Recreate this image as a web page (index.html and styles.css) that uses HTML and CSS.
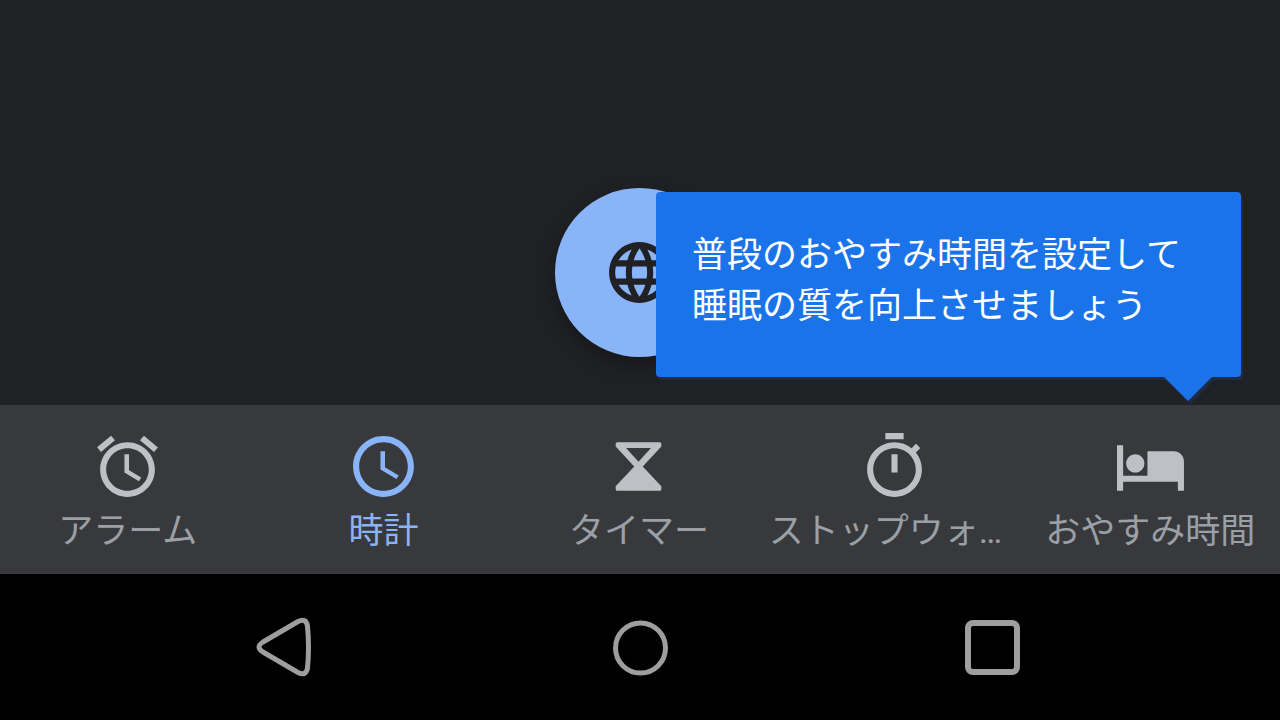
FILE: index.html
```html
<!DOCTYPE html>
<html lang="ja">
<head>
    <meta charset="UTF-8">
    <meta name="viewport" content="width=device-width, initial-scale=1.0">
    <title>時計</title>
    <link rel="stylesheet" href="styles.css">
</head>
<body>
    <main class="content">
        <button class="fab" aria-label="都市を追加">
            <svg class="icon" viewBox="0 0 24 24"><path d="M11.99 2C6.47 2 2 6.48 2 12s4.47 10 9.99 10C17.52 22 22 17.52 22 12S17.52 2 11.99 2zm6.93 6h-2.95c-.32-1.25-.78-2.45-1.38-3.56 1.84.63 3.37 1.91 4.33 3.56zM12 4.04c.83 1.2 1.48 2.53 1.91 3.96h-3.82c.43-1.43 1.08-2.76 1.91-3.96zM4.26 14C4.1 13.36 4 12.69 4 12s.1-1.36.26-2h3.38c-.08.66-.14 1.32-.14 2 0 .68.06 1.34.14 2H4.26zm.82 2h2.95c.32 1.25.78 2.45 1.38 3.56-1.84-.63-3.37-1.9-4.33-3.56zm2.95-8H5.08c.96-1.66 2.49-2.93 4.33-3.56C8.81 5.55 8.35 6.75 8.03 8zM12 19.96c-.83-1.2-1.48-2.53-1.91-3.96h3.82c-.43 1.43-1.08 2.76-1.91 3.96zM14.34 14H9.66c-.09-.66-.16-1.32-.16-2 0-.68.07-1.35.16-2h4.68c.09.65.16 1.32.16 2 0 .68-.07 1.34-.16 2zm.25 5.56c.6-1.11 1.06-2.31 1.38-3.56h2.95c-.96 1.65-2.49 2.93-4.33 3.56zM16.36 14c.08-.66.14-1.32.14-2 0-.68-.06-1.34-.14-2h3.38c.16.64.26 1.31.26 2s-.1 1.36-.26 2h-3.38z"/></svg>
        </button>
        <div class="tooltip" role="tooltip">普段のおやすみ時間を設定して<br>睡眠の質を向上させましょう</div>
    </main>

    <nav class="tabs">
        <button class="tab">
            <svg class="icon" viewBox="0 0 24 24"><path d="M22 5.72l-4.6-3.86-1.29 1.53 4.6 3.86L22 5.72zM7.88 3.39L6.6 1.86 2 5.71l1.29 1.53 4.59-3.85zM12.5 8H11v6l4.75 2.85.75-1.23-4-2.37V8zM12 4c-4.97 0-9 4.03-9 9s4.02 9 9 9c4.97 0 9-4.03 9-9s-4.03-9-9-9zm0 16c-3.87 0-7-3.13-7-7s3.13-7 7-7 7 3.13 7 7-3.13 7-7 7z"/></svg>
            <span class="label">アラーム</span>
        </button>
        <button class="tab active">
            <svg class="icon" viewBox="0 0 24 24"><path d="M12 2C6.48 2 2 6.48 2 12s4.48 10 10 10 10-4.48 10-10S17.52 2 12 2zm0 18c-4.42 0-8-3.58-8-8s3.58-8 8-8 8 3.58 8 8-3.58 8-8 8zM12.5 7H11v6l5.25 3.15.75-1.23-4.5-2.67z"/></svg>
            <span class="label">時計</span>
        </button>
        <button class="tab">
            <svg class="icon" viewBox="0 0 24 24"><path fill-rule="evenodd" d="M5 4h14q.5 0 .5.5v.9L13.4 12l6.1 6.5v1q0 .5-.5.5H5q-.5 0-.5-.5v-1L10.6 12 4.5 5.4v-.9Q4.5 4 5 4zM7.9 5.9L12 10.4l4.1-4.5z"/></svg>
            <span class="label">タイマー</span>
        </button>
        <button class="tab">
            <svg class="icon" viewBox="0 0 24 24"><path d="M15 1H9v2h6V1zm-4 13h2V8h-2v6zm8.03-6.61l1.42-1.42c-.43-.51-.9-.99-1.41-1.41l-1.42 1.42C16.07 4.74 14.12 4 12 4c-4.97 0-9 4.03-9 9s4.02 9 9 9 9-4.03 9-9c0-2.12-.74-4.07-1.97-5.61zM12 20c-3.87 0-7-3.13-7-7s3.13-7 7-7 7 3.13 7 7-3.13 7-7 7z"/></svg>
            <span class="label">ストップウォッチ</span>
        </button>
        <button class="tab">
            <svg class="icon" viewBox="0 0 24 24"><path d="M7 14c1.66 0 3-1.34 3-3s-1.34-3-3-3-3 1.34-3 3 1.34 3 3 3zM19.7 7H11v8H3V5H1v15h2v-3h18v3h2v-9.7C23 8.48 21.52 7 19.7 7z"/></svg>
            <span class="label">おやすみ時間</span>
        </button>
    </nav>

    <div class="system-bar">
        <button class="system-button" aria-label="戻る">
            <svg class="system-icon" viewBox="0 0 64 64"><path d="M7 26L42 5.5Q50 1.5 51.5 10Q53.500 32 51.5 52Q50 60.5 42 56.5L7 36Q-1 31 7 26z"/></svg>
        </button>
        <button class="system-button" aria-label="ホーム">
            <svg class="system-icon" viewBox="0 0 64 64"><circle cx="32.5" cy="32" r="25"/></svg>
        </button>
        <button class="system-button" aria-label="最近使ったアプリ">
            <svg class="system-icon recents" viewBox="0 0 64 64"><rect x="8" y="7" width="49" height="49" rx="5"/></svg>
        </button>
    </div>
</body>
</html>
```

FILE: styles.css
```css
* {
    box-sizing: border-box;
}

body {
    display: flex;
    flex-direction: column;
    min-height: 100vh;
    margin: 0;
    background: #202125;
    font-family: Roboto, "Noto Sans CJK JP", sans-serif;
    font-size: 35px;
}

button {
    border: none;
    background: none;
    color: inherit;
    font: inherit;
    cursor: pointer;
}

.icon {
    display: block;
    flex: none;
    width: 73px;
    height: 73px;
    fill: currentColor;
}

.content {
    position: relative;
    display: flex;
    flex: 1;
    justify-content: center;
    align-items: flex-end;
    padding: 0 2px 48px 0;
}

.fab {
    display: flex;
    justify-content: center;
    align-items: center;
    width: 169px;
    height: 169px;
    padding: 0;
    border-radius: 50%;
    background: #8ab4f8;
    color: #202125;
    box-shadow: 0 8px 20px rgba(0, 0, 0, 0.3);
}

.tooltip {
    position: absolute;
    right: 39px;
    bottom: 28px;
    z-index: 1;
    width: 585px;
    padding: 38px 36px 45px;
    border-radius: 4px;
    background: #1a73e8;
    color: #fff;
    line-height: 51px;
    white-space: nowrap;
    filter: drop-shadow(2px 3px 0 #1b2d49);
}

.tooltip::after {
    content: "";
    position: absolute;
    right: 29px;
    bottom: -24px;
    border: 24px solid transparent;
    border-top-color: #1a73e8;
    border-bottom: none;
}

.tabs {
    display: grid;
    grid-template-columns: repeat(5, 1fr);
    padding-right: 2px;
    background: #38393d;
    color: #bdc1c6;
}

.tab {
    display: flex;
    flex-direction: column;
    align-items: center;
    min-width: 0;
    padding: 25px 2px 14px;
}

.label {
    max-width: 100%;
    overflow: hidden;
    color: #9aa0a6;
    line-height: 57px;
    white-space: nowrap;
    text-overflow: ellipsis;
}

.active,
.active .label {
    color: #8ab4f8;
}

.system-bar {
    display: flex;
    justify-content: center;
    background: #000;
}

.system-button {
    display: flex;
    justify-content: center;
    width: 352px;
    padding: 42px 0 40px;
}

.system-icon {
    width: 64px;
    height: 64px;
    fill: none;
    stroke: #9e9e9e;
    stroke-width: 5;
}

.recents {
    stroke-width: 6;
}
```
